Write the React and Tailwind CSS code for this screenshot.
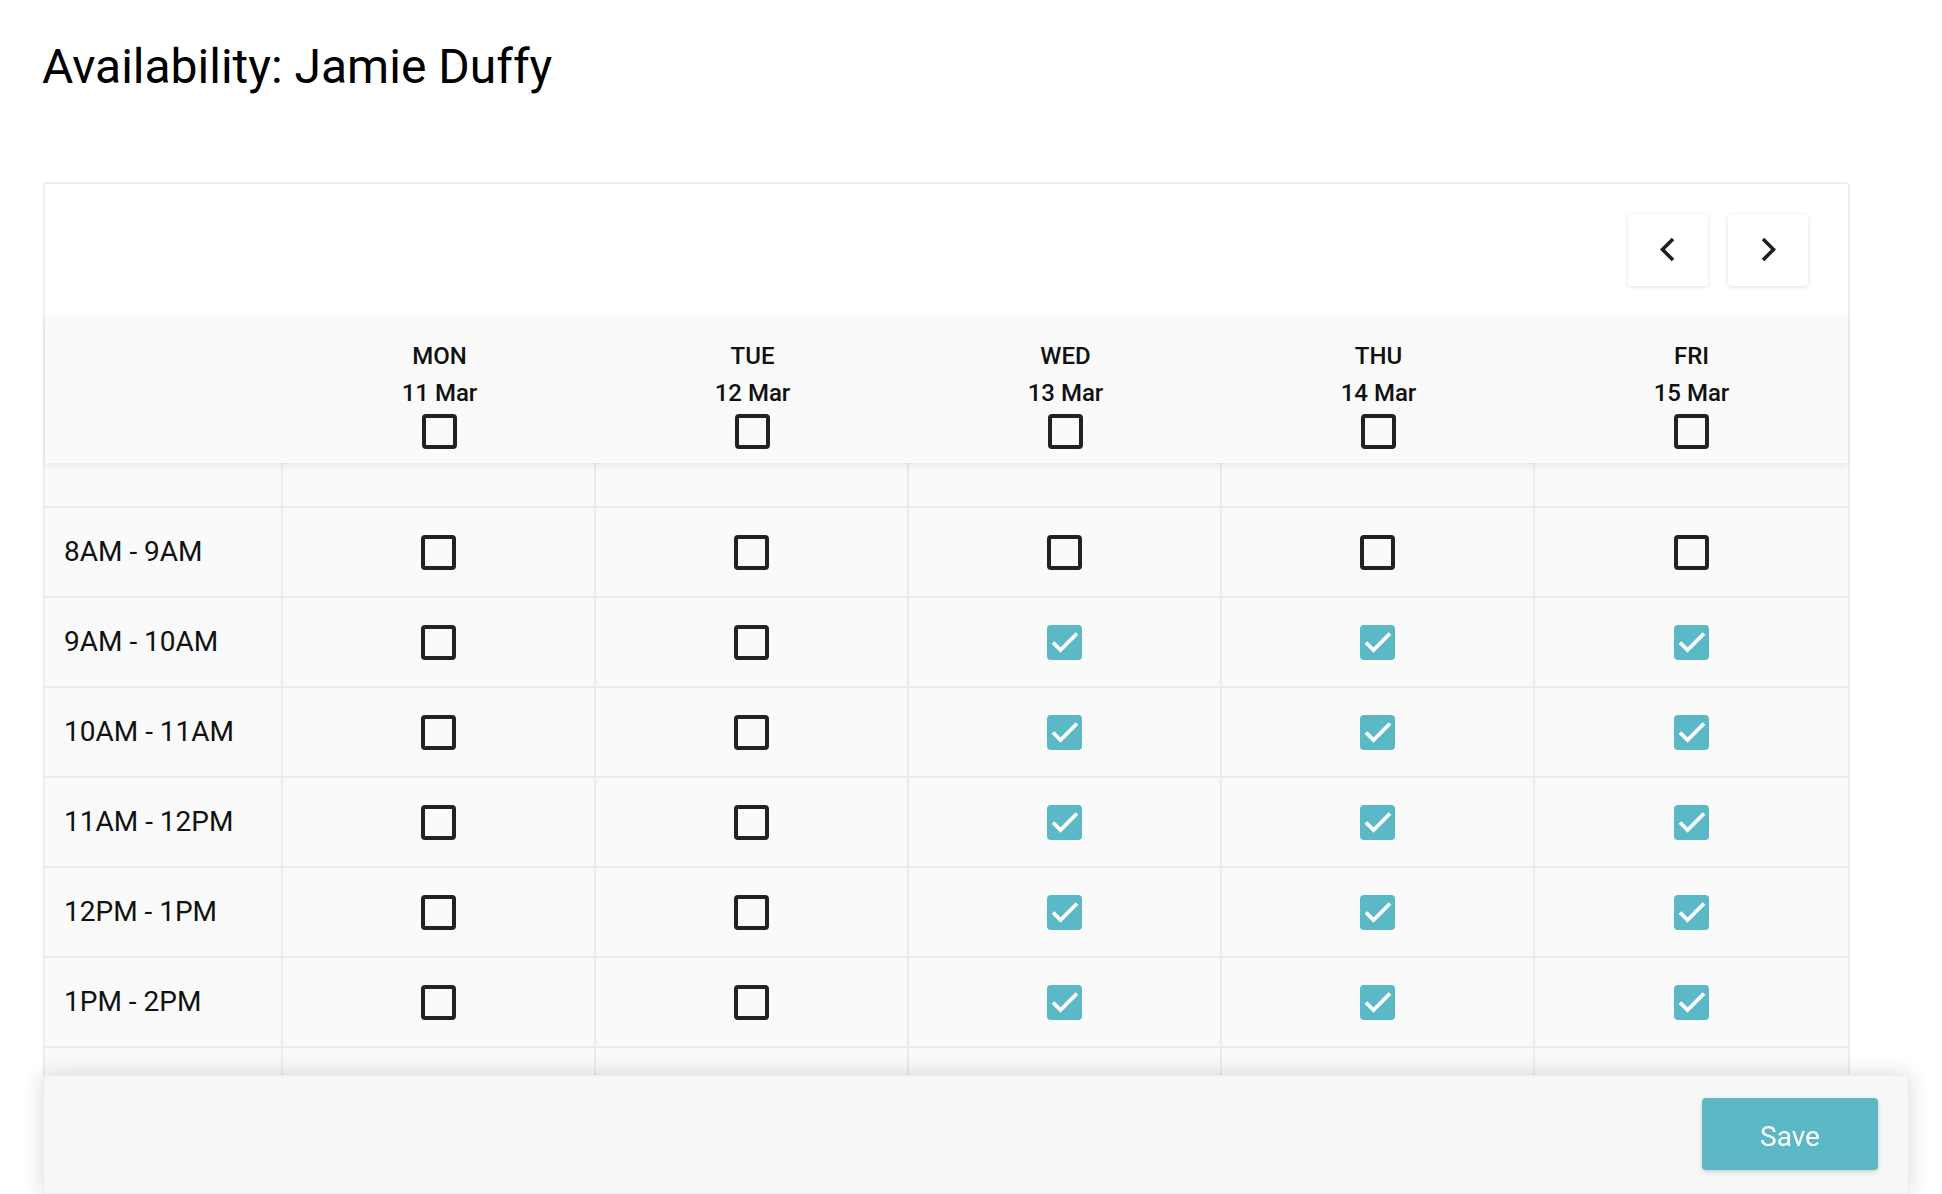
import React from "react";

const days = [
  ["MON", "11 Mar"],
  ["TUE", "12 Mar"],
  ["WED", "13 Mar"],
  ["THU", "14 Mar"],
  ["FRI", "15 Mar"],
];

const slots = [
  "8AM - 9AM",
  "9AM - 10AM",
  "10AM - 11AM",
  "11AM - 12PM",
  "12PM - 1PM",
  "1PM - 2PM",
  "2PM - 3PM",
  "3PM - 4PM",
];

function Box({ checked }) {
  if (checked) {
    return (
      <span className="flex h-[35px] w-[35px] items-center justify-center rounded-[4px] bg-[#5bb9c7]">
        <svg width="35" height="35" viewBox="0 0 35 35">
          <path d="M6 17.5 L13.5 25 L30 8.5" fill="none" stroke="#ffffff" strokeWidth="3.8" />
        </svg>
      </span>
    );
  }
  return <span className="block h-[35px] w-[35px] rounded-[4px] border-[4px] border-[#222222]" />;
}

function Chevron({ dir }) {
  return (
    <svg width="18" height="26" viewBox="0 0 18 26">
      <path
        d={dir === "left" ? "M14 2 L3.5 12.5 L14 23" : "M4 2 L14.5 12.5 L4 23"}
        fill="none"
        stroke="#1f1f1f"
        strokeWidth="3.6"
      />
    </svg>
  );
}

export default function App() {
  return (
    <div className="relative h-screen overflow-hidden bg-white font-['Roboto',sans-serif] text-[#111]">
      <h1 className="pl-[42px] pt-[39px] text-[48px] font-normal leading-[56px] text-black">
        Availability: Jamie Duffy
      </h1>

      <div className="ml-[43px] mt-[87px] w-[1807px] rounded-[4px] border-2 border-[#ededed] bg-white">
        <div className="flex h-[131px] items-center justify-end gap-[20px] pr-[40px]">
          <button className="flex h-[72px] w-[80px] items-center justify-center rounded-[4px] bg-white shadow-[0_1px_4px_rgba(0,0,0,0.13)]">
            <Chevron dir="left" />
          </button>
          <button className="flex h-[72px] w-[80px] items-center justify-center rounded-[4px] bg-white shadow-[0_1px_4px_rgba(0,0,0,0.13)]">
            <Chevron dir="right" />
          </button>
        </div>

        <div className="relative z-10 grid grid-cols-[238px_repeat(5,minmax(0,1fr))] bg-[#fafafa] shadow-[0_3px_6px_rgba(0,0,0,0.07)]">
          <div />
          {days.map(([d, date]) => (
            <div key={d} className="flex flex-col items-center pb-[14px] pt-[23px]">
              <div className="text-[24px] font-medium leading-[37px]">{d}</div>
              <div className="text-[24px] font-medium leading-[37px]">{date}</div>
              <div className="mt-[2px]">
                <Box checked={false} />
              </div>
            </div>
          ))}
        </div>

        <div className="grid grid-cols-[238px_repeat(5,minmax(0,1fr))] bg-[#fafafa]">
          <div className="h-[45px] border-b-2 border-r-2 border-[#ebebeb]" />
          {days.map(([d], i) => (
            <div
              key={d}
              className={`h-[45px] border-b-2 border-[#ebebeb] ${i < 4 ? "border-r-2" : ""}`}
            />
          ))}
          {slots.map((s, r) => (
            <React.Fragment key={s}>
              <div className="flex h-[90px] items-center border-b-2 border-r-2 border-[#ebebeb] pl-[19px] text-[28px]">
                {s}
              </div>
              {days.map(([d], i) => (
                <div
                  key={d}
                  className={`flex h-[90px] items-center justify-center border-b-2 border-[#ebebeb] ${i < 4 ? "border-r-2" : ""}`}
                >
                  <Box checked={r >= 1 && i >= 2} />
                </div>
              ))}
            </React.Fragment>
          ))}
        </div>
      </div>

      <div className="fixed bottom-0 left-[43px] z-20 flex h-[119px] w-[1866px] items-start justify-end rounded-t-[4px] border border-[#ececec] bg-[#f7f7f7] pr-[30px] pt-[22px] shadow-[0_0_22px_rgba(0,0,0,0.16)]">
        <button className="h-[72px] w-[176px] rounded-[4px] bg-[#5bb9c7] pt-[5px] text-[28px] text-white shadow-[0_2px_5px_rgba(0,0,0,0.16)]">
          Save
        </button>
      </div>
    </div>
  );
}
